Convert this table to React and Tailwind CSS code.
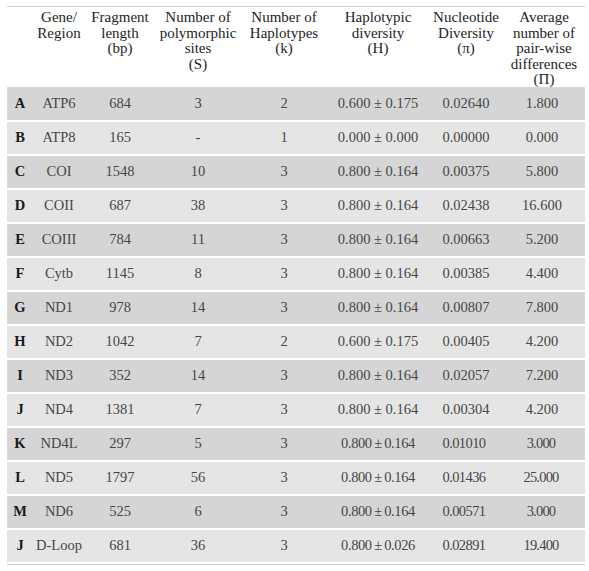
import React from "react";

const rows = [
  ["A", "ATP6", "684", "3", "2", "0.600 ± 0.175", "0.02640", "1.800"],
  ["B", "ATP8", "165", "-", "1", "0.000 ± 0.000", "0.00000", "0.000"],
  ["C", "COI", "1548", "10", "3", "0.800 ± 0.164", "0.00375", "5.800"],
  ["D", "COII", "687", "38", "3", "0.800 ± 0.164", "0.02438", "16.600"],
  ["E", "COIII", "784", "11", "3", "0.800 ± 0.164", "0.00663", "5.200"],
  ["F", "Cytb", "1145", "8", "3", "0.800 ± 0.164", "0.00385", "4.400"],
  ["G", "ND1", "978", "14", "3", "0.800 ± 0.164", "0.00807", "7.800"],
  ["H", "ND2", "1042", "7", "2", "0.600 ± 0.175", "0.00405", "4.200"],
  ["I", "ND3", "352", "14", "3", "0.800 ± 0.164", "0.02057", "7.200"],
  ["J", "ND4", "1381", "7", "3", "0.800 ± 0.164", "0.00304", "4.200"],
  ["K", "ND4L", "297", "5", "3", "0.800\u2009±\u20090.164", "0.01010", "3.000"],
  ["L", "ND5", "1797", "56", "3", "0.800\u2009±\u20090.164", "0.01436", "25.000"],
  ["M", "ND6", "525", "6", "3", "0.800\u2009±\u20090.164", "0.00571", "3.000"],
  ["J", "D-Loop", "681", "36", "3", "0.800\u2009±\u20090.026", "0.02891", "19.400"],
];

const headers = [
  [""],
  ["Gene/", "Region"],
  ["Fragment", "length", "(bp)"],
  ["Number of", "polymorphic", "sites", "(S)"],
  ["Number of", "Haplotypes", "(k)"],
  ["Haplotypic", "diversity", "(H)"],
  ["Nucleotide", "Diversity", "(π)"],
  ["Average", "number of", "pair-wise", "differences", "(Π)"],
];

const grid =
  "grid grid-cols-[26px_52px_70px_86px_86px_102px_74px_82px]";

export default function App() {
  return (
    <div
      className="bg-white w-[589px] h-[571px] pt-[6px] pl-[7px]"
      style={{ fontFamily: '"Liberation Serif", "Times New Roman", serif' }}
    >
      <div className="w-[578px] border-t border-[#d2d2d2]">
        <div className={`${grid} h-[81px] pt-[3px] text-[15px] leading-[15.5px] text-[#1e1e1e] border-b border-[#d8d8d8]`}>
          {headers.map((h, i) => (
            <div key={i} className="text-center">
              {h.map((l, j) => (
                <div key={j} className="whitespace-nowrap">{l}</div>
              ))}
            </div>
          ))}
        </div>
        <div className="border-b border-[#cfcfcf]">
          {rows.map((r, i) => {
            const late = i >= 10;
            return (
              <div
                key={i}
                className={`${grid} h-[34px] border-b-2 border-white items-center text-[14.5px] text-[#474747] ${
                  i % 2 === 0 ? "bg-[#d5d5d5]" : "bg-[#e5e5e5]"
                }`}
              >
                <div className="text-center font-bold text-[#1a1a1a]">{r[0]}</div>
                <div className="text-center">{r[1]}</div>
                <div className="text-center">{r[2]}</div>
                <div className="text-center">{r[3]}</div>
                <div className="text-center">{r[4]}</div>
                <div className={`text-center whitespace-nowrap ${late ? "tracking-[-0.4px]" : ""}`}>{r[5]}</div>
                <div className={`text-center ${late ? "tracking-[-0.6px] pr-[4px]" : ""}`}>{r[6]}</div>
                <div className={`text-center ${late ? "tracking-[-0.8px] pr-[6px]" : "pr-[4px]"}`}>{r[7]}</div>
              </div>
            );
          })}
        </div>
      </div>
    </div>
  );
}
